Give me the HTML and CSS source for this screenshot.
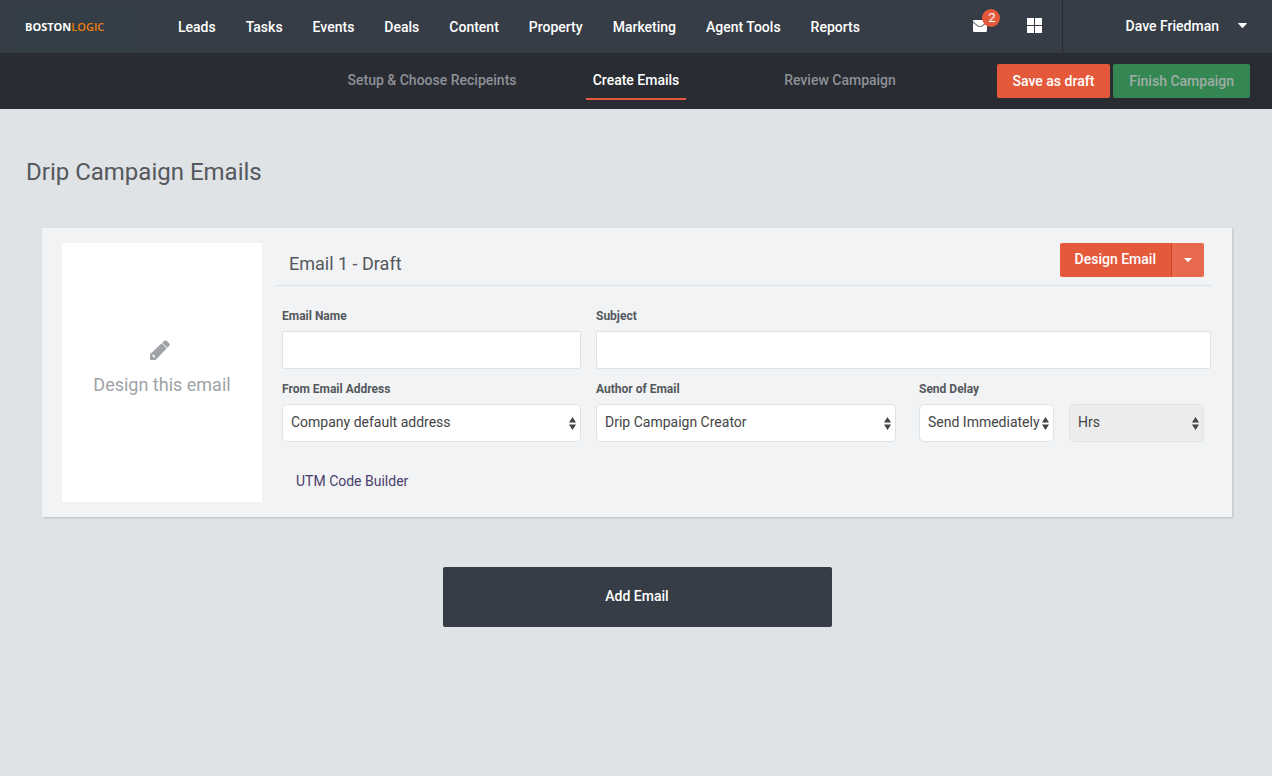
FILE: index.html
```
<!DOCTYPE html>
<html lang="en">
<head>
<meta charset="utf-8">
<meta name="viewport" content="width=device-width, initial-scale=1">
<title>Drip Campaign Emails</title>
<link rel="stylesheet" href="styles.css">
</head>
<body>
<header class="topbar">
  <a class="brand" href="#"><span>BOSTON</span><span class="brand-accent">LOGIC</span></a>
  <nav class="main-nav">
    <a href="#">Leads</a>
    <a href="#">Tasks</a>
    <a href="#">Events</a>
    <a href="#">Deals</a>
    <a href="#">Content</a>
    <a href="#">Property</a>
    <a href="#">Marketing</a>
    <a href="#">Agent Tools</a>
    <a href="#">Reports</a>
  </nav>
  <div class="tools">
    <button class="icon-button" type="button" aria-label="Messages">
      <svg width="14" height="12" viewBox="0 0 14 12"><path fill="#fff" d="M1.200 0H12.800Q14 0 14 1.200V1.600L9.200 5.600Q7 7.200 4.800 5.600L0 1.600V1.200Q0 0 1.200 0ZM0 2.400L4.200 6Q7 8.200 9.800 6L14 2.400V10.800Q14 12 12.800 12H1.200Q0 12 0 10.800Z"/></svg>
      <span class="badge">2</span>
    </button>
    <button class="icon-button" type="button" aria-label="Applications">
      <svg width="15" height="15" viewBox="0 0 15 15"><path fill="#fff" d="M0 0H7V7H0ZM8 0H15V7H8ZM0 8H7V15H0ZM8 8H15V15H8Z"/></svg>
    </button>
  </div>
  <button class="user-menu" type="button">
    <span>Dave Friedman</span>
    <svg width="9" height="5" viewBox="0 0 9 5"><path fill="#fff" d="M0.500 0H8.500Q9 0.300 8.600 0.800L5 4.700Q4.500 5.200 4 4.700L0.400 0.800Q0 0.300 0.500 0Z"/></svg>
  </button>
</header>

<div class="stepbar">
  <nav class="steps">
    <a href="#">Setup &amp; Choose Recipeints</a>
    <a class="active" href="#" aria-current="step">Create Emails</a>
    <a href="#">Review Campaign</a>
  </nav>
  <div class="step-actions">
    <button class="button primary" type="button">Save as draft</button>
    <button class="button success" type="button">Finish Campaign</button>
  </div>
</div>

<main class="page">
  <h1>Drip Campaign Emails</h1>

  <section class="card">
    <button class="thumb" type="button">
      <svg width="20" height="20" viewBox="0 0 20 20"><path fill="#9fa3a8" fill-rule="evenodd" d="M12.200 2.800L14.200 0.900Q15.500 -0.400 16.800 0.900L19.200 3.300Q20.500 4.600 19.200 5.900L17.300 7.800ZM11.700 3.300L16.800 8.300L6 19.400Q5.400 20 4.700 20H0.800Q0 20 0 19.200V14.800Q0 14.200 0.500 13.700ZM2.400 14.800V16.200H3.600V17.600H5V16.400Q4.800 15 3.600 14.800Z"/></svg>
      <span>Design this email</span>
    </button>
    <div class="details">
      <div class="details-head">
        <h2>Email 1 - Draft</h2>
        <div class="split">
          <button class="button primary" type="button">Design Email</button>
          <button class="split-toggle" type="button" aria-label="More design options">
            <svg width="8" height="4" viewBox="0 0 8 4"><path fill="#fff" d="M0 0H8L4.500 3.700Q4 4.200 3.500 3.700Z"/></svg>
          </button>
        </div>
      </div>
      <form class="form">
        <div class="row">
          <div class="field">
            <label for="name">Email Name</label>
            <input id="name" type="text">
          </div>
          <div class="field">
            <label for="subject">Subject</label>
            <input id="subject" type="text">
          </div>
        </div>
        <div class="row">
          <div class="field">
            <label for="from">From Email Address</label>
            <div class="select">
              <select id="from"><option>Company default address</option></select>
              <svg width="7" height="13" viewBox="0 0 7 13"><path fill="#444" d="M3.500 0L7 5.500H0ZM0 7.500H7L3.500 13Z"/></svg>
            </div>
          </div>
          <div class="subrow">
            <div class="field">
              <label for="author">Author of Email</label>
              <div class="select">
                <select id="author"><option>Drip Campaign Creator</option></select>
                <svg width="7" height="13" viewBox="0 0 7 13"><path fill="#444" d="M3.500 0L7 5.500H0ZM0 7.500H7L3.500 13Z"/></svg>
              </div>
            </div>
            <div class="field">
              <label for="delay">Send Delay</label>
              <div class="delay">
                <div class="select">
                  <select id="delay"><option>Send Immediately</option></select>
                  <svg width="7" height="13" viewBox="0 0 7 13"><path fill="#444" d="M3.500 0L7 5.500H0ZM0 7.500H7L3.500 13Z"/></svg>
                </div>
                <div class="select">
                  <select aria-label="Delay unit" disabled><option>Hrs</option></select>
                  <svg width="7" height="13" viewBox="0 0 7 13"><path fill="#444" d="M3.500 0L7 5.500H0ZM0 7.500H7L3.500 13Z"/></svg>
                </div>
              </div>
            </div>
          </div>
        </div>
      </form>
      <a class="utm" href="#">UTM Code Builder</a>
    </div>
  </section>

  <button class="add" type="button">Add Email</button>
</main>
</body>
</html>
```
FILE: styles.css
```
* { box-sizing: border-box; }

body {
  margin: 0;
  min-height: 100vh;
  background: #dfe3e6;
  color: #55585c;
  font: 14px/20px Roboto, "Liberation Sans", sans-serif;
}

a { text-decoration: none; }

button {
  font: inherit;
  border: 0;
  padding: 0;
  background: none;
  cursor: pointer;
}

svg { display: block; }

.topbar {
  display: flex;
  align-items: stretch;
  height: 53px;
  background: #363d46;
  color: #fff;
}

.brand {
  display: flex;
  align-items: center;
  width: 125px;
  margin: 4px 0 4px 12px;
  padding-left: 13px;
  background: #333e46;
  color: #fff;
  font: 700 11px/16px "Open Sans", sans-serif;
}

.brand-accent { color: #f27d0c; font-weight: 600; }

.main-nav {
  display: flex;
  flex: 1;
  align-items: center;
  gap: 30px;
  padding-left: 41px;
}

.main-nav a {
  color: #fff;
  font-weight: 500;
  white-space: nowrap;
}

.tools {
  display: flex;
  align-items: center;
  gap: 40px;
  padding: 0 20px 2px;
}

.icon-button { position: relative; }

.badge {
  position: absolute;
  left: 9px;
  top: -11px;
  width: 18px;
  height: 18px;
  border-radius: 50%;
  background: #e5593b;
  color: #fff;
  padding-left: 2px;
  font-size: 13px;
  line-height: 18px;
}

.user-menu {
  display: flex;
  align-items: center;
  justify-content: flex-end;
  gap: 19px;
  width: 210px;
  padding: 0 25px 2px 0;
  border-left: 1px solid #292e35;
  color: #fff;
  font-weight: 500;
}

.stepbar {
  display: grid;
  grid-template-columns: 1fr auto 1fr;
  align-items: center;
  height: 56px;
  padding: 0 22px;
  background: #292c33;
}

.steps {
  grid-column: 2;
  display: grid;
  grid-template-columns: repeat(3, 204px);
  justify-items: center;
}

.steps a {
  padding: 8px 7px;
  border-bottom: 2px solid transparent;
  color: #8e9196;
  font-weight: 500;
  white-space: nowrap;
}

.steps .active {
  border-color: #e5593b;
  color: #fff;
}

.step-actions {
  display: flex;
  justify-content: flex-end;
  gap: 3px;
}

.button {
  height: 34px;
  padding: 0 15px 2px;
  border-radius: 2px;
  font-weight: 500;
  white-space: nowrap;
}

.step-actions .button { padding: 0 16px 1px; }

.primary { background: #e5593b; color: #fff; }
.success { background: #348753; color: #a0ada4; }

.page {
  display: flex;
  flex-direction: column;
  padding: 48px 40px 40px 42px;
}

h1, h2 { margin: 0; font-weight: 400; }

h1 {
  margin-left: -16px;
  font-size: 24px;
  line-height: 30px;
}

.card {
  display: flex;
  gap: 13px;
  margin-top: 41px;
  padding: 15px 20px;
  background: #f1f3f5;
  box-shadow: 1px 1px 2px rgba(0, 0, 0, 0.15);
}

.thumb {
  display: flex;
  flex: none;
  flex-direction: column;
  align-items: center;
  justify-content: center;
  gap: 13px;
  width: 200px;
  min-height: 259px;
  padding-bottom: 8px;
  background: #fff;
  color: #9fa3a8;
  font-size: 18px;
  line-height: 24px;
}

.thumb svg { margin-right: 4px; }

.details { flex: 1; }

.details-head {
  display: flex;
  align-items: flex-start;
  justify-content: space-between;
  padding: 0 8px 8px 14px;
  border-bottom: 1px solid #dfe3e6;
}

h2 {
  padding-top: 9px;
  font-size: 18px;
  line-height: 24px;
}

.split { display: flex; }

.split .button { border-radius: 2px 0 0 2px; }

.split-toggle {
  display: flex;
  align-items: center;
  justify-content: center;
  width: 33px;
  border-left: 1px solid #c4492f;
  border-radius: 0 2px 2px 0;
  background: #e7694e;
}

.form {
  display: grid;
  gap: 12px;
  padding: 22px 1px 0 7px;
}

.row {
  display: grid;
  grid-template-columns: 299fr 615fr;
  gap: 15px;
}

.subrow {
  display: flex;
  gap: 23px;
  padding-right: 7px;
}

.subrow > .field:first-child { flex: 1; }

.field {
  display: flex;
  flex-direction: column;
  gap: 7px;
  min-width: 0;
}

label {
  font-size: 12px;
  font-weight: 700;
  line-height: 16px;
}

input,
select {
  width: 100%;
  height: 38px;
  padding: 0 8px;
  border: 1px solid #dfe3e6;
  border-radius: 2px;
  background: #fff;
  color: #444;
  font: inherit;
}

select {
  padding-bottom: 2px;
  border-radius: 5px;
  appearance: none;
}

select:disabled {
  background: #ececec;
  color: #444;
  opacity: 1;
}

.delay { display: flex; gap: 15px; }
.delay .select { width: 135px; }

.select { position: relative; }

.select svg {
  position: absolute;
  right: 5px;
  top: 13px;
  pointer-events: none;
}

.utm {
  display: inline-block;
  margin: 29px 0 0 21px;
  color: #4d3d6b;
}

.add {
  align-self: center;
  width: 389px;
  max-width: 100%;
  height: 60px;
  margin-top: 50px;
  padding-bottom: 2px;
  border-radius: 2px;
  background: #363d46;
  color: #fff;
  font-weight: 500;
}
```
